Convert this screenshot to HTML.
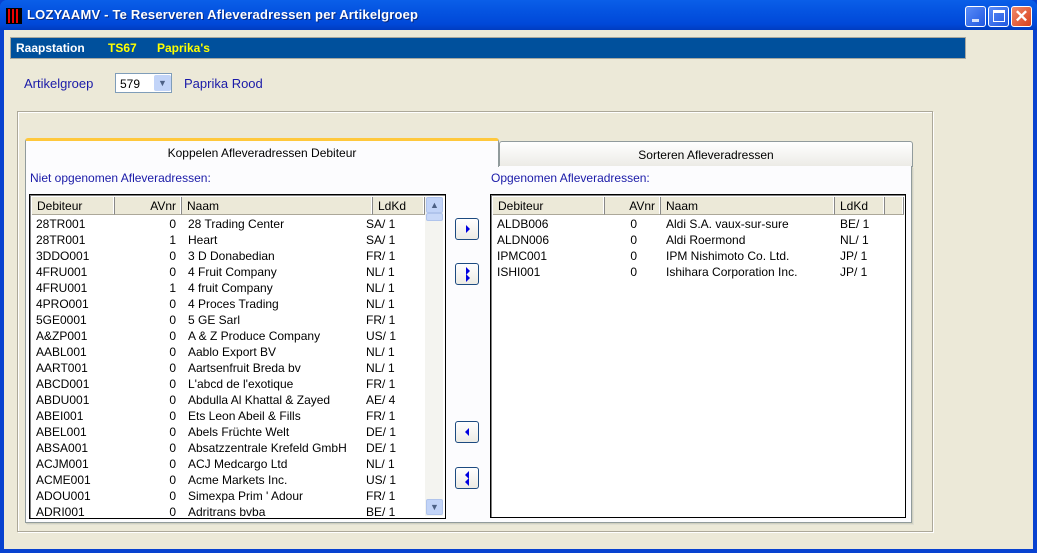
<!DOCTYPE html>
<html><head><style>
*{margin:0;padding:0;box-sizing:border-box}
body{width:1037px;height:553px;overflow:hidden;background:#0842d0;font-family:"Liberation Sans",sans-serif;font-size:12px;position:relative}
.abs{position:absolute}
#title{left:0;top:0;width:1037px;height:30px;background:linear-gradient(#0a5fe8,#0453e0 40%,#0048d8 80%,#003cc0);border-radius:7px 7px 0 0}
#title .t{left:27px;top:7px;color:#fff;font-weight:bold;font-size:13px;text-shadow:1px 1px #0a2a80;letter-spacing:0.2px}
#client{left:4px;top:30px;width:1029px;height:519px;background:#ece9d8}
.wb{top:6px;width:21px;height:21px;border:1px solid #fff;border-radius:3px;background:linear-gradient(135deg,#5a8cf8,#2058e0)}
.bar{left:10px;top:37px;width:956px;height:22px;background:#00509c;border:1px solid #a8a8a0}
.bar span{position:absolute;top:3px;font-weight:bold;font-size:12px}
.lbl{color:#1a1aa8;font-size:12px}
.list{background:#fff;border:1px solid #000;box-shadow:inset 1px 1px #808080}
.hdr{position:absolute;top:2px;height:18px;background:#ece9d8;border-right:1px solid #888;border-bottom:1px solid #aca899;box-shadow:inset -1px 0 #fff;padding:2px 5px;font-size:12px;color:#000}
.row{position:absolute;height:16px;font-size:12px;color:#000;white-space:nowrap}
.btn{position:absolute;width:24px;height:22px;border:1px solid #1c4a80;border-radius:3px;background:linear-gradient(#fff,#ecebe4)}
</style></head><body>
<div id="title" class="abs">
 <div class="abs" style="left:6px;top:8px;width:16px;height:16px;background:#000"></div>
 <div class="abs" style="left:8px;top:9px;width:2px;height:14px;background:#e00"></div>
 <div class="abs" style="left:12px;top:9px;width:2px;height:14px;background:#e00"></div>
 <div class="abs" style="left:16px;top:9px;width:2px;height:14px;background:#e00"></div>
 <div class="t abs">LOZYAAMV - Te Reserveren Afleveradressen per Artikelgroep</div>
 <div class="abs wb" style="left:965px"><div class="abs" style="left:6px;top:12px;width:7px;height:3px;background:#fff;opacity:.8"></div></div>
 <div class="abs wb" style="left:988px"><div class="abs" style="left:4px;top:3px;width:12px;height:12px;border:1px solid #fff;border-top:3px solid #fff"></div></div>
 <div class="abs wb" style="left:1011px;background:linear-gradient(135deg,#f08a6a,#d8401c);color:#fff;font-size:17px;font-weight:bold;text-align:center;line-height:19px">✕</div>
</div>
<div id="client" class="abs"></div>
<div class="abs bar"><span style="left:5px;color:#fff">Raapstation</span><span style="left:97px;color:#ff0">TS67</span><span style="left:146px;color:#ff0">Paprika's</span></div>
<div class="abs lbl" style="left:24px;top:76px;font-size:13px">Artikelgroep</div>
<div class="abs" style="left:115px;top:73px;width:57px;height:20px;border:1px solid #7f9db9;background:#fff;font-size:12px;padding:3px 4px">579
 <div class="abs" style="left:38px;top:1px;width:17px;height:16px;background:#c2d4f8;border-radius:2px;color:#4d6185;font-size:9px;text-align:center;line-height:16px">▼</div></div>
<div class="abs lbl" style="left:184px;top:76px;font-size:13px">Paprika Rood</div>
<div class="abs" style="left:17px;top:111px;width:916px;height:421px;border:1px solid #aca899;box-shadow:1px 1px #fff, inset 1px 1px #fff"></div>
<div class="abs" style="left:499px;top:141px;width:414px;height:26px;border:1px solid #919b9c;border-radius:3px 3px 0 0;background:linear-gradient(#fff,#ecebe6);text-align:center;padding-top:6px;font-size:12px">Sorteren Afleveradressen</div>
<div class="abs" style="left:25px;top:166px;width:887px;height:357px;background:#fcfcfe;border:1px solid #919b9c;border-top:none;box-shadow:1px 1px #d0d0bf, 2px 2px #e0dfd3"></div>
<div class="abs" style="left:25px;top:138px;width:474px;height:29px;background:#fcfcfe;border:1px solid #919b9c;border-bottom:none;border-top:3px solid #ffc83c;border-radius:3px 3px 0 0;text-align:center;padding-top:5px;font-size:12px">Koppelen Afleveradressen Debiteur</div>
<div class="abs lbl" style="left:30px;top:171px">Niet opgenomen Afleveradressen:</div>
<div class="abs lbl" style="left:491px;top:171px">Opgenomen Afleveradressen:</div>
<div class="abs list" style="left:29px;top:194px;width:417px;height:325px;overflow:hidden">
 <div class="hdr" style="left:2px;width:83px">Debiteur</div>
 <div class="hdr" style="left:85px;width:67px;text-align:right">AVnr</div>
 <div class="hdr" style="left:152px;width:191px">Naam</div>
 <div class="hdr" style="left:343px;width:52px">LdKd</div>
 <div class="abs" style="left:395px;top:2px;width:18px;height:319px;background:#f4f4f0"></div>
 <div class="abs" style="left:396px;top:2px;width:17px;height:16px;background:#c2d4f8;border:1px solid #b0c4ec;border-radius:2px;color:#4d6185;font-size:9px;text-align:center;line-height:14px">▲</div>
 <div class="abs" style="left:396px;top:18px;width:17px;height:8px;background:#c8d8f8;border:1px solid #b0c4ec;border-radius:2px"></div>
 <div class="abs" style="left:396px;top:304px;width:17px;height:16px;background:#c2d4f8;border:1px solid #b0c4ec;border-radius:2px;color:#4d6185;font-size:9px;text-align:center;line-height:14px">▼</div>
 <div id="L"></div>
</div>
<div class="abs list" style="left:490px;top:194px;width:416px;height:324px;overflow:hidden">
 <div class="hdr" style="left:2px;width:112px">Debiteur</div>
 <div class="hdr" style="left:114px;width:56px;text-align:right">AVnr</div>
 <div class="hdr" style="left:170px;width:174px">Naam</div>
 <div class="hdr" style="left:344px;width:50px">LdKd</div>
 <div class="hdr" style="left:394px;width:19px"></div>
 <div class="row" style="left:6px;top:22px">ALDB006</div><div class="row" style="left:114px;top:22px;width:32px;text-align:right">0</div><div class="row" style="left:175px;top:22px">Aldi S.A. vaux-sur-sure</div><div class="row" style="left:349px;top:22px">BE/ 1</div>
 <div class="row" style="left:6px;top:38px">ALDN006</div><div class="row" style="left:114px;top:38px;width:32px;text-align:right">0</div><div class="row" style="left:175px;top:38px">Aldi Roermond</div><div class="row" style="left:349px;top:38px">NL/ 1</div>
 <div class="row" style="left:6px;top:54px">IPMC001</div><div class="row" style="left:114px;top:54px;width:32px;text-align:right">0</div><div class="row" style="left:175px;top:54px">IPM Nishimoto Co. Ltd.</div><div class="row" style="left:349px;top:54px">JP/ 1</div>
 <div class="row" style="left:6px;top:70px">ISHI001</div><div class="row" style="left:114px;top:70px;width:32px;text-align:right">0</div><div class="row" style="left:175px;top:70px">Ishihara Corporation Inc.</div><div class="row" style="left:349px;top:70px">JP/ 1</div>
</div>
<div class="btn" style="left:455px;top:218px"><svg width="22" height="20"><path d="M10 6 L14 10 L10 14Z" fill="#0000e0"/></svg></div>
<div class="btn" style="left:455px;top:263px"><svg width="22" height="20"><path d="M10 3 L14 7 L10 11Z M10 10 L14 14 L10 18Z" fill="#0000e0"/></svg></div>
<div class="btn" style="left:455px;top:421px"><svg width="22" height="20"><path d="M13 6 L9 10 L13 14Z" fill="#0000e0"/></svg></div>
<div class="btn" style="left:455px;top:467px"><svg width="22" height="20"><path d="M13 3 L9 7 L13 11Z M13 10 L9 14 L13 18Z" fill="#0000e0"/></svg></div>
<script>
var d=[["28TR001",0,"28 Trading Center","SA/ 1"],["28TR001",1,"Heart","SA/ 1"],["3DDO001",0,"3 D Donabedian","FR/ 1"],["4FRU001",0,"4 Fruit Company","NL/ 1"],["4FRU001",1,"4 fruit Company","NL/ 1"],["4PRO001",0,"4 Proces Trading","NL/ 1"],["5GE0001",0,"5 GE Sarl","FR/ 1"],["A&ZP001",0,"A & Z Produce Company","US/ 1"],["AABL001",0,"Aablo Export BV","NL/ 1"],["AART001",0,"Aartsenfruit Breda bv","NL/ 1"],["ABCD001",0,"L'abcd de l'exotique","FR/ 1"],["ABDU001",0,"Abdulla Al Khattal & Zayed","AE/ 4"],["ABEI001",0,"Ets Leon Abeil & Fills","FR/ 1"],["ABEL001",0,"Abels Früchte Welt","DE/ 1"],["ABSA001",0,"Absatzzentrale Krefeld GmbH","DE/ 1"],["ACJM001",0,"ACJ Medcargo Ltd","NL/ 1"],["ACME001",0,"Acme Markets Inc.","US/ 1"],["ADOU001",0,"Simexpa Prim ' Adour","FR/ 1"],["ADRI001",0,"Adritrans bvba","BE/ 1"]];
var h="";d.forEach(function(r,i){var t=22+i*16;h+='<div class="row" style="left:6px;top:'+t+'px">'+r[0].replace("&","&amp;")+'</div><div class="row" style="left:85px;top:'+t+'px;width:61px;text-align:right">'+r[1]+'</div><div class="row" style="left:158px;top:'+t+'px">'+r[2].replace(/&/g,"&amp;")+'</div><div class="row" style="left:336px;top:'+t+'px">'+r[3]+'</div>';});
document.getElementById("L").innerHTML=h;
</script>
</body></html>
